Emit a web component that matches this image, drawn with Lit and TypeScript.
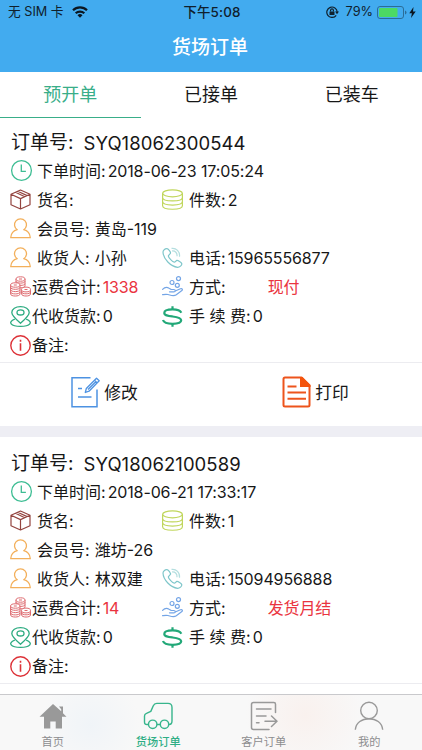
import { LitElement, html, svg, css, nothing } from "lit";
import { customElement, property } from "lit/decorators.js";
import { classMap } from "lit/directives/class-map.js";

const icons: Record<string, unknown> = {
  clock: svg`<g stroke="#3dbd93" stroke-width="1.3"><circle cx="11.5" cy="10.5" r="9.9"/><path d="M11.3 4.6v6.8h4.6"/></g>`,
  box: svg`<g stroke="#93443f" stroke-width="1.2" stroke-linejoin="round"><path d="M10.5 1L20 5.3v10.4L10.5 20 1 15.7V5.3zM1 5.3l9.5 4.3L20 5.3M10.5 9.600V20M5.500 3.300l9.300 4.400M7.700 2.300l9.400 4.300"/></g>`,
  user: svg`<g stroke="#f3b05c" stroke-width="1.3" stroke-linejoin="round"><path d="M7.300 11.700a6 5.900 0 1 1 6.400 0c4 .9 6.200 3.300 6.600 8H.7c.4-4.700 2.600-7.100 6.600-8z"/></g>`,
  coins: svg`<g stroke="#c0d65c" stroke-width="1.200"><ellipse cx="10.500" cy="4.300" rx="9.900" ry="3.500"/><path d="M.6 4.300v12.500c0 4.600 19.800 4.600 19.800 0V4.300M.6 8.500c0 4.600 19.800 4.600 19.800 0M.6 12.600c0 4.600 19.800 4.600 19.800 0"/></g>`,
  phone: svg`<g stroke="#7ec6ca" stroke-width="1.200" stroke-linejoin="round"><path d="M5 1.700C3.500 1.200 1 3.200 1 5c.2 7 7.800 14.600 14.600 15.300 2 0 4.500-2 4.200-3.600-.4-1.300-3.900-3.500-4.900-3.300-1 .2-1.600 1.900-2.600 1.800-1.800-.3-5.800-4.500-6-6.300 0-1 1.700-1.400 1.900-2.400C9.400 5.400 6.500 2.100 5 1.700z"/><path stroke="#b4dedf" d="M9.500 1.400c4.800-.7 8.600 3.200 8 8.300M10 4c3.300-.3 5.400 1.900 5 5.200"/></g>`,
  money: svg`<g stroke="#de6b70" stroke-width="1" fill="#fff"><path d="M6 3v7c0 2.400 9 2.400 9 0V3"/><ellipse cx="10.500" cy="3" rx="4.500" ry="2.200"/><path fill="none" d="M6 5.300c0 2.400 9 2.400 9 0M6 7.600c0 2.400 9 2.400 9 0"/><path d="M.6 9v9c0 2.700 9.400 2.700 9.400 0V9"/><ellipse cx="5.300" cy="9" rx="4.700" ry="2.200"/><path fill="none" d="M.6 11.300c0 2.700 9.400 2.700 9.400 0M.6 13.600c0 2.700 9.400 2.700 9.400 0M.6 15.900c0 2.700 9.400 2.700 9.400 0"/><path d="M11.600 13.500v4.500c0 2.700 8.900 2.700 8.900 0v-4.500"/><ellipse cx="16" cy="13.500" rx="4.500" ry="2.400"/><path fill="none" d="M11.600 15.800c0 2.700 8.900 2.700 8.900 0"/><path d="M9 3h3M3.800 9h3M14.500 13.500h3"/></g>`,
  hand: svg`<g stroke="#74a5e6" stroke-width="1.200" stroke-linejoin="round" stroke-linecap="round"><circle cx="16.500" cy="2.600" r="2"/><circle cx="10" cy="6.500" r="2"/><circle cx="15.300" cy="9.300" r="2"/><path d="M.6 13.300c2-2.200 4.600-2.400 6.500-1.100l2.100 1.300h2.600c2 0 2 2.300 0 2.300H7.500M13.200 15l5.300-2.300c1.600-.6 2.600.9 1.400 1.900l-5.600 4.200c-3 2-5.700.3-8.300-.3-1.900-.4-3.700-.1-5.400.1"/></g>`,
  pin: svg`<g stroke="#2cab80" stroke-width="1.300"><path d="M10.500 17.300C6 13.400 1.800 9.900 1.800 6.600 1.800 3 5.600.700 10.500.700s8.700 2.300 8.700 5.900c0 3.300-4.200 6.800-8.700 10.700z"/><ellipse cx="10.500" cy="6.400" rx="3.500" ry="2.600"/><path d="M4.800 13.200C-3 16 1 20.400 10.500 20.400s13.500-4.400 5.700-7.200"/></g>`,
  dollar: svg`<g stroke="#22a878" stroke-width="2.200"><path d="M10.500.3v3.500M10.500 17.200v3.500"/><path d="M19.300 6.700c-.9-2-4.400-3.300-8.700-3.300-4.600 0-8.300 1.300-8.300 3.500 0 2.500 4 3 8.300 3.600 4.700.6 8.600 1.400 8.600 3.800 0 2.300-3.900 3.500-8.600 3.500-4.800 0-8.900-1.400-9.600-3.800"/></g>`,
  info: svg`<g stroke="#dd3238" stroke-width="1.400"><circle cx="10.500" cy="10.500" r="9.700"/><path stroke-width="1.600" d="M10.500 8.300v7.400M10.500 4.800v2"/></g>`,
};

@customElement("line-icon")
class LineIcon extends LitElement {
  @property() name = "";
  static styles = css`
    :host { display: block; width: 21px; height: 21px; flex: none; }
    .glyph { display: block; width: 21px; height: 21px; overflow: visible; }
  `;
  render() {
    return html`<svg class="glyph" viewBox="0 0 21 21" fill="none">${icons[this.name]}</svg>`;
  }
}

interface Order {
  no: string; time: string; pieces: string; member: string; receiver: string;
  phone: string; freight: string; pay: string; editable: boolean;
}

const orders: Order[] = [
  { no: "SYQ18062300544", time: "2018-06-23 17:05:24", pieces: "2", member: "黄岛-119", receiver: "小孙", phone: "15965556877", freight: "1338", pay: "现付", editable: true },
  { no: "SYQ18062100589", time: "2018-06-21 17:33:17", pieces: "1", member: "潍坊-26", receiver: "林双建", phone: "15094956888", freight: "14", pay: "发货月结", editable: false },
];

@customElement("order-card")
class OrderCard extends LitElement {
  @property({ attribute: false }) order!: Order;
  static styles = css`
    :host { display: block; height: 310px; background: #fff; box-sizing: border-box; padding-top: 14px; }
    .title { display: flex; align-items: center; height: 26px; line-height: 26px; padding-left: 11px; font-size: 19px; white-space: pre; }
    .no { margin-left: 10px; font-size: 18.5px; letter-spacing: 0.06px; }
    .rows { height: 207px; border-bottom: 1px solid #ececf0; box-sizing: border-box; }
    .row { display: grid; grid-template-columns: 152px 1fr; height: 29.1px; padding-left: 10px; }
    .field { display: flex; align-items: center; white-space: pre; font-size: 16px; line-height: 24px; }
    .label { margin-left: 6px; }
    .tight .label { margin-left: 1px; }
    .value { margin-left: 2px; letter-spacing: -0.12px; }
    .apart .value { margin-left: 5px; letter-spacing: 0; }
    .red { color: #ea3440; }
    .pay .value { margin-left: 42px; }
    .actions { display: grid; grid-template-columns: 1fr 1fr; height: 63px; }
    .action { display: flex; align-items: center; justify-content: center; font-size: 16.8px; padding: 0 2px 5px 0; }
    .pen, .doc { width: 29px; height: 32px; margin-right: 4px; }
  `;
  field(icon: string, label: string, value = "", kind = "") {
    const classes: Record<string, boolean> = { field: true };
    for (const k of kind.split(" ")) if (k) classes[k] = true;
    const red = kind.includes("money") || kind.includes("pay");
    return html`<div class=${classMap(classes)}>
      <line-icon name=${icon}></line-icon><span class="label">${label}</span>${value
        ? html`<span class=${classMap({ value: true, red })}>${value}</span>` : nothing}
    </div>`;
  }
  actions() {
    return html`<div class="actions">
        <div class="action">
          <svg class="pen" viewBox="0 0 29 32" fill="none" stroke="#4d92e2" stroke-width="1.500"><path d="M19.500 1.700H1v29h25V13.500M7 12.500h4M7 21h13.500"/><path stroke-width="1.300" stroke-linejoin="round" d="M14.300 16.500l1-4L25.500 2.300l2.700 2.500L18 15.200zM23.500 4.300l2.700 2.600M17 13.500l8-8"/></svg>
          <span>修改</span>
        </div>
        <div class="action">
          <svg class="doc" viewBox="0 0 29 32" fill="none" stroke="#ed541c" stroke-width="2"><path stroke-linejoin="round" d="M19.500 1.500H3Q1.500 1.500 1.500 3v26q0 1.500 1.500 1.500h23q1.500 0 1.500-1.500V9.500z"/><path fill="#f4540c" stroke="none" d="M18 1h2.500l8 8v2H18z"/><path d="M5.500 10.500h9M5.500 16.500H24M5.500 22.700H24"/></svg>
          <span>打印</span>
        </div>
      </div>`;
  }
  render() {
    const o = this.order;
    return html`
      <div class="title"><span>订单号:</span><span class="no">${o.no}</span></div>
      <div class="rows">
        <div class="row">${this.field("clock", "下单时间:", o.time)}</div>
        <div class="row">${this.field("box", "货名:")}${this.field("coins", "件数:", o.pieces)}</div>
        <div class="row">${this.field("user", "会员号:", o.member, "apart")}</div>
        <div class="row">${this.field("user", "收货人:", o.receiver, "apart")}${this.field("phone", "电话:", o.phone)}</div>
        <div class="row">${this.field("money", "运费合计:", o.freight, "tight money")}${this.field("hand", "方式:", o.pay, "pay")}</div>
        <div class="row">${this.field("pin", "代收货款:", "0", "tight")}${this.field("dollar", "手 续 费:", "0")}</div>
        <div class="row">${this.field("info", "备注:", "", "tight")}</div>
      </div>
      ${o.editable ? this.actions() : nothing}`;
  }
}

@customElement("app-root")
class AppRoot extends LitElement {
  static styles = css`
    :host { display: flex; flex-direction: column; width: 422px; height: 750px; overflow: hidden; background: #eeeef4; color: #171717; font-family: Inter, "Noto Sans CJK SC", sans-serif; }
    .top { height: 72px; flex: none; background: #42abef; }
    .status { display: grid; grid-template-columns: 1fr auto 1fr; height: 24px; align-items: center; padding: 0 6px 0 8px; color: #10202c; font-size: 12.7px; line-height: 18px; white-space: pre; }
    .carrier, .battery { display: flex; align-items: center; }
    .battery { justify-content: flex-end; }
    .time { font-weight: 500; font-size: 13.4px; letter-spacing: 0.15px; line-height: 20px; }
    .wifi { width: 16px; height: 12px; margin-left: 8px; }
    .lock { width: 13px; height: 12px; margin-right: 7px; }
    .cell { width: 30px; height: 13px; margin-left: 4px; }
    .bolt { width: 7px; height: 11px; margin-left: 2px; }
    .heading { height: 48px; line-height: 48px; text-align: center; font-size: 19px; font-weight: 500; color: #fff; padding-right: 2px; }
    .tabs { position: relative; z-index: 1; display: grid; grid-template-columns: repeat(3, 1fr); height: 46px; flex: none; background: #fff; }
    .tab { text-align: center; line-height: 45px; font-size: 18px; box-sizing: border-box; }
    .tab.on { color: #39ae89; border-bottom: 1px solid #39ae89; }
    .list { flex: 1; min-height: 0; overflow: hidden; display: flex; flex-direction: column; gap: 11px; margin-top: -2px; }
    .list order-card { flex: none; }
    .nav { height: 56px; flex: none; box-sizing: border-box; border-top: 1px solid #c9c9cc; background: radial-gradient(circle at 90px 30px, #f0f4f8 0, transparent 50px), radial-gradient(circle at 305px 20px, #f9f1ee 0, transparent 60px), #f8f8f8; display: grid; grid-template-columns: repeat(4, 1fr); }
    .item { display: flex; flex-direction: column; align-items: center; color: #8d8d8f; font-size: 11.2px; line-height: 16px; padding-top: 5px; }
    .item.on { color: #2fae85; font-weight: 500; }
    .pic { width: 32px; height: 32px; overflow: visible; margin-bottom: 2px; }
  `;
  render() {
    return html`
      <header class="top">
        <div class="status">
          <div class="carrier"><span>无 SIM 卡</span><svg class="wifi" viewBox="0 0 16 12" fill="none" stroke="#0b1620" stroke-width="2.200"><path d="M1 4.300a10 10 0 0 1 14 0M3.700 7.300a6.200 6.200 0 0 1 8.600 0"/><path fill="#0b1620" stroke="none" d="M5.500 9.200a3.600 3.600 0 0 1 5 0L8 11.700z"/></svg></div>
          <span class="time">下午5:08</span>
          <div class="battery">
            <svg class="lock" viewBox="0 0 13 12" fill="none" stroke="#10202c" stroke-width="1.200"><path d="M10.200 9.300A5.200 5.200 0 1 1 11.200 6"/><path fill="#10202c" stroke="none" d="M9 5.500h4L11 8.300zM3.500 5.500h5V9h-5z"/><path d="M4.600 5.500V4.300a1.400 1.400 0 0 1 2.800 0v1.200"/></svg>
            <span>79%</span>
            <svg class="cell" viewBox="0 0 30 13" fill="none"><rect x=".5" y=".5" width="26" height="12" rx="2.500" stroke="#2b6d97"/><rect x="2" y="2" width="18.500" height="9" rx="1" fill="#4cd964"/><path d="M28 4.500q1.500.5 1.500 2t-1.500 2z" fill="#2b6d97"/></svg>
            <svg class="bolt" viewBox="0 0 7 11"><path fill="#0b1620" d="M4.500 0L.3 6.200h2.600L2 11l4.700-6.600H4z"/></svg>
          </div>
        </div>
        <div class="heading">货场订单</div>
      </header>
      <nav class="tabs"><div class="tab on">预开单</div><div class="tab">已接单</div><div class="tab">已装车</div></nav>
      <main class="list">${orders.map((o) => html`<order-card .order=${o}></order-card>`)}</main>
      <footer class="nav">
        <div class="item"><svg class="pic" viewBox="0 0 32 32" fill="#999"><path d="M16 4L2.500 16.800H7V28.500h6.300V21.500h5.400v7H25V16.800h4.500L26 13.300V6.500h-4l2.200 2.800v2z"/></svg><span>首页</span></div>
        <div class="item on"><svg class="pic" viewBox="0 0 32 32" fill="none" stroke="#37b58c" stroke-width="1.400" stroke-linejoin="round"><path d="M6.500 24.500H5q-2.500 0-2.500-2.500v-6q0-2 2-2.600l4.300-2 2.500-5.700q1-2.300 3.500-2.300H26q4 0 4 4V21q0 3.500-3 3.500M15 24.500h3"/><circle cx="10.700" cy="24.300" r="4.200"/><circle cx="22.500" cy="24.300" r="4.200"/></svg><span>货场订单</span></div>
        <div class="item"><svg class="pic" viewBox="0 0 32 32" fill="none" stroke="#999" stroke-width="1.500" stroke-linecap="round" stroke-linejoin="round"><path d="M27.500 12.500V4.200Q27.500 2.500 25.800 2.500H5.500Q3.500 2.500 3.500 4.500v23q0 2 2 2H21M8.500 9h14.500M8.500 16h9.500M8.500 22.700h2.500M17 21.300h11.500M23.500 16l5.500 5.300-5.500 5.200"/></svg><span>客户订单</span></div>
        <div class="item"><svg class="pic" viewBox="0 0 32 32" fill="none" stroke="#999" stroke-width="1.400"><circle cx="16" cy="10.500" r="8.300"/><path d="M2.300 29.800C3 22.500 9 18.800 16 18.800s13 3.700 13.700 11"/></svg><span>我的</span></div>
      </footer>`;
  }
}
